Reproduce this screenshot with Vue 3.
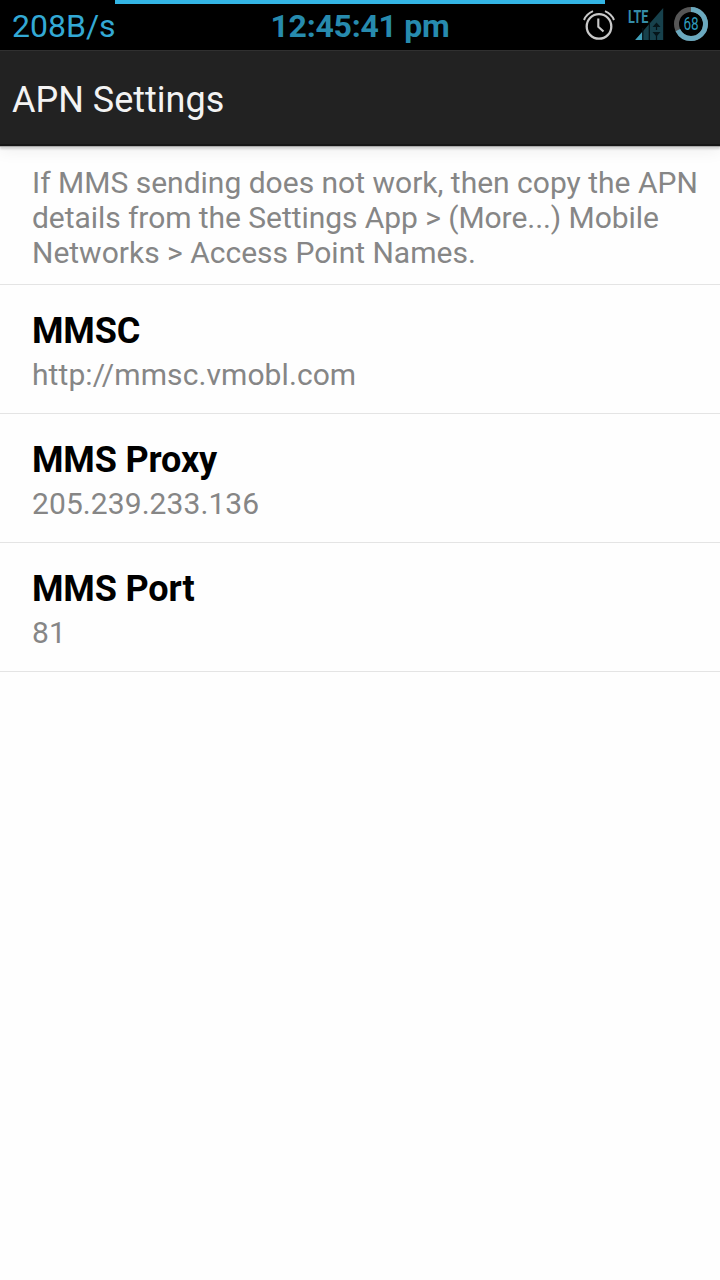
<template>
  <div class="screen">
    <header class="status-bar">
      <div class="usage-line"></div>
      <span class="net-speed">208B/s</span>
      <span class="clock">12:45:41 pm</span>
      <div class="status-icons">
        <svg class="icon-alarm" width="34" height="34" viewBox="0 0 34 34" fill="none" stroke="#c9c9c9">
          <circle cx="17" cy="18.4" r="12.3" stroke-width="2.3" />
          <path d="M16.3 10.5v8.2l5.2 4.8" stroke-width="2.1" />
          <path d="M2 12Q4.500 6 11 3.200M23 3.200Q29.500 6 32 12" stroke-width="2" />
        </svg>
        <div class="signal">
          <svg width="38" height="34" viewBox="0 0 38 34">
            <path d="M36.200 0V32H8.200z" fill="#17414c" />
            <path d="M15.200 24V32H8.200z" fill="#419fb8" />
            <path d="M15.800 20V32M22.300 14V32M29.500 19v3M29.500 26v6" stroke="#051116" stroke-width="1.200" />
            <path d="M25.500 19l4-4.500 4 4.500zM25.500 24l4 4.500 4-4.500z" fill="#06151a" />
          </svg>
          <span class="signal-type">LTE</span>
        </div>
        <div class="battery">
          <svg width="34" height="34" viewBox="0 0 34 34" fill="none" stroke-width="5">
            <circle cx="17" cy="17" r="14.500" stroke="#565656" />
            <circle
              cx="17"
              cy="17"
              r="14.500"
              stroke="#6ba9bf"
              pathLength="100"
              :stroke-dasharray="`${batteryLevel} 100`"
              transform="rotate(-90 17 17)"
            />
          </svg>
          <span class="battery-level">{{ batteryLevel }}</span>
        </div>
      </div>
    </header>

    <div class="action-bar">
      <h1>APN Settings</h1>
    </div>

    <main class="preferences">
      <div class="note">
        <div v-for="line in noteLines" :key="line">{{ line }}</div>
      </div>
      <div v-for="item in settings" :key="item.title" class="preference">
        <div class="title">{{ item.title }}</div>
        <div class="summary">{{ item.value }}</div>
      </div>
    </main>
  </div>
</template>

<script setup>
import { ref } from 'vue'

const batteryLevel = ref(68)

const noteLines = [
  'If MMS sending does not work, then copy the APN',
  'details from the Settings App > (More...) Mobile',
  'Networks > Access Point Names.',
]

const settings = ref([
  { title: 'MMSC', value: 'http://mmsc.vmobl.com' },
  { title: 'MMS Proxy', value: '205.239.233.136' },
  { title: 'MMS Port', value: '81' },
])
</script>

<style>
body {
  background: #fefefe;
}
</style>

<style scoped>
.screen {
  width: 720px;
  height: 1280px;
  overflow: hidden;
  background: #fefefe;
  font-family: Roboto, sans-serif;
}

/* status bar */
.status-bar {
  position: relative;
  z-index: 1; /* keeps the action bar shadow below it */
  display: grid;
  grid-template-columns: 1fr auto 1fr;
  align-items: center;
  height: 50px;
  padding: 0 12px;
  box-sizing: border-box;
  background: #000;
  font-size: 32px;
  line-height: 38px;
}

.usage-line {
  position: absolute;
  top: 0;
  left: 115px;
  width: 490px;
  height: 4px;
  background: #33b5e5;
}

.net-speed {
  padding-top: 2px;
  color: #33a9d5;
}

.clock {
  padding-top: 2px;
  color: #278bae;
  font-weight: bold;
  letter-spacing: -0.25px;
}

.status-icons {
  display: flex;
  justify-content: flex-end;
  align-items: center;
}

.icon-alarm {
  margin-right: 11px;
}

.signal,
.battery {
  position: relative;
  display: flex;
}

.battery {
  top: -1px;
}

.signal {
  margin-right: 9px;
}

.signal-type {
  position: absolute;
  top: -1px;
  left: 1px;
  color: #358da8;
  font-size: 18px;
  font-weight: bold;
  line-height: 20px;
  transform: scaleX(0.7);
  transform-origin: left;
}

.battery-level {
  position: absolute;
  inset: 0;
  color: #2f9cbd;
  font-size: 18px;
  line-height: 34px;
  text-align: center;
  transform: scaleX(0.75);
}

/* action bar */
.action-bar {
  position: relative;
  display: flex;
  align-items: center;
  height: 96px;
  padding: 4px 12px 0;
  box-sizing: border-box;
  border-top: 1px solid #303030;
  border-bottom: 2px solid #171717;
  background: #222;
  box-shadow: 0 1px 0 #aaa, 0 3px 2px #d4d4d4, 0 4px 16px #eee;
}

.action-bar h1 {
  margin: 0;
  color: #f3f3f3;
  font-size: 36px;
  font-weight: normal;
  line-height: 42px;
}

/* preference list */
.note,
.preference {
  padding: 0 32px;
  box-sizing: border-box;
  border-bottom: 1px solid #e4e4e4;
}

.note {
  height: 139px;
  padding-top: 19px;
  color: #868686;
  font-size: 30px;
  line-height: 35px;
  white-space: nowrap;
}

.note div:nth-child(2) {
  letter-spacing: -0.06px;
}

.preference {
  height: 129px;
  padding-top: 25px;
}

.title {
  color: #000;
  font-size: 36px;
  font-weight: bold;
  letter-spacing: -0.15px;
  line-height: 42px;
}

.summary {
  margin-top: 5px;
  color: #868686;
  font-size: 30px;
  letter-spacing: 0.08px;
  line-height: 35px;
}
</style>
